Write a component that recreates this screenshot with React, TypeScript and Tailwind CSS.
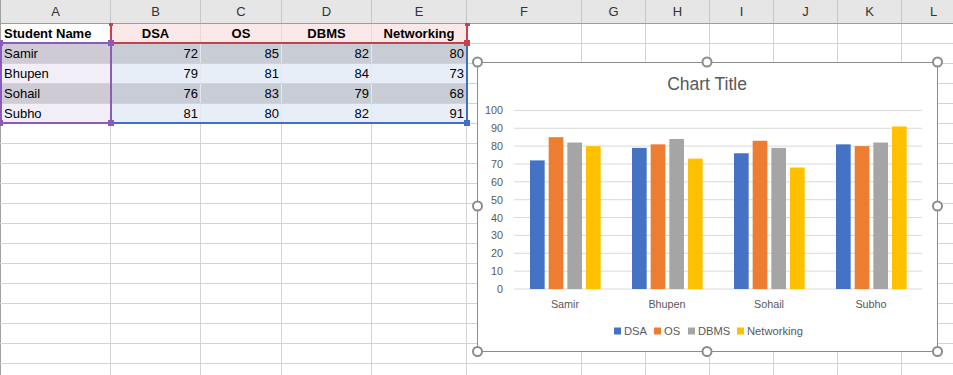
import React from "react";

const COLS = [
  { l: "A", w: 111 },
  { l: "B", w: 90 },
  { l: "C", w: 81 },
  { l: "D", w: 90 },
  { l: "E", w: 95 },
  { l: "F", w: 115 },
  { l: "G", w: 64 },
  { l: "H", w: 64 },
  { l: "I", w: 64 },
  { l: "J", w: 64 },
  { l: "K", w: 64 },
  { l: "L", w: 64 },
];

const DATA: [string, number, number, number, number][] = [
  ["Samir", 72, 85, 82, 80],
  ["Bhupen", 79, 81, 84, 73],
  ["Sohail", 76, 83, 79, 68],
  ["Subho", 81, 80, 82, 91],
];

const SERIES = [
  { name: "DSA", color: "#4472c4" },
  { name: "OS", color: "#ed7d31" },
  { name: "DBMS", color: "#a5a5a5" },
  { name: "Networking", color: "#ffc000" },
];

const FONT = { fontFamily: '"Liberation Sans", Arial, sans-serif' };

function Cell({
  w,
  children,
  className = "",
}: {
  w: number;
  children?: React.ReactNode;
  className?: string;
}) {
  return (
    <div
      className={`h-full shrink-0 border-r border-[#d4d4d4] overflow-hidden whitespace-nowrap ${className}`}
      style={{ width: w }}
    >
      {children}
    </div>
  );
}

function Chart() {
  const y0 = 226;
  const unit = 1.786;
  const ticks = [0, 10, 20, 30, 40, 50, 60, 70, 80, 90, 100];
  const handles = [
    [0.5, 0],
    [230, 0],
    [460.5, 0],
    [0.5, 144],
    [460.5, 144],
    [0.5, 289.5],
    [230, 289.5],
    [460.5, 289.5],
  ];
  return (
    <div className="absolute left-[477px] top-[62px] w-[461px] h-[290px] border border-[#8c8c8c] bg-white">
      <svg width={459} height={288} style={FONT}>
        <text x={229} y={27} textAnchor="middle" fontSize={17.5} fill="#595959">
          Chart Title
        </text>
        {ticks.map((t) => (
          <g key={t}>
            <line
              x1={36}
              x2={444}
              y1={y0 - t * unit}
              y2={y0 - t * unit}
              stroke="#d9d9d9"
              strokeWidth={1}
            />
            <text
              x={25}
              y={y0 - t * unit + 4}
              textAnchor="end"
              fontSize={10.8}
              fill="#595959"
            >
              {t}
            </text>
          </g>
        ))}
        {DATA.map((row, i) => {
          const cs = 36 + i * 102;
          return (
            <g key={row[0]}>
              {SERIES.map((s, j) => {
                const v = row[j + 1] as number;
                return (
                  <rect
                    key={s.name}
                    x={cs + 16 + j * 18.67}
                    y={y0 - v * unit}
                    width={14.67}
                    height={v * unit}
                    fill={s.color}
                  />
                );
              })}
              <text
                x={cs + 51}
                y={245}
                textAnchor="middle"
                fontSize={10.8}
                fill="#595959"
              >
                {row[0]}
              </text>
            </g>
          );
        })}
        {[
          { sx: 136, tx: 146 },
          { sx: 176, tx: 186 },
          { sx: 210, tx: 220 },
          { sx: 259, tx: 269 },
        ].map((p, i) => (
          <g key={i}>
            <rect x={p.sx} y={264.5} width={7} height={7} fill={SERIES[i].color} />
            <text x={p.tx} y={272} fontSize={11.2} fill="#595959">
              {SERIES[i].name}
            </text>
          </g>
        ))}
      </svg>
      {/* selection handles drawn over the frame */}
      <svg
        className="absolute -left-[9px] -top-[9px] overflow-visible pointer-events-none"
        width={479}
        height={308}
      >
        {handles.map(([x, y], i) => (
          <circle
            key={i}
            cx={x + 8}
            cy={y + 8}
            r={4.5}
            fill="#ffffff"
            stroke="#8c8c8c"
            strokeWidth={2}
          />
        ))}
      </svg>
    </div>
  );
}

function RangeHighlights() {
  const red = "#c4424c";
  const blue = "#3f6fc6";
  const purple = "#8a5cb8";
  return (
    <svg
      className="absolute left-0 top-0 pointer-events-none"
      width={480}
      height={130}
    >
      {/* series names B1:E1 */}
      <rect x={110} y={23} width={2} height={21} fill={red} />
      <rect x={466} y={23} width={2} height={21} fill={red} />
      <rect x={110} y={42} width={358} height={2} fill={red} />
      {/* values B2:E5 */}
      <rect x={466} y={43} width={2} height={81} fill={blue} />
      <rect x={110} y={122} width={358} height={2} fill={blue} />
      {/* categories A2:A5 */}
      <rect x={0} y={42} width={112} height={2} fill={purple} />
      <rect x={0} y={42} width={2} height={82} fill={purple} />
      <rect x={110} y={42} width={2} height={82} fill={purple} />
      <rect x={0} y={122} width={112} height={2} fill={purple} />
      {/* handles */}
      <rect x={109} y={23} width={4} height={3} fill={red} />
      <rect x={465} y={23} width={5} height={3} fill={red} />
      <rect x={464} y={40} width={6} height={6} fill={red} />
      <rect x={108} y={40} width={6} height={6} fill={purple} />
      <rect x={108} y={120} width={6} height={6} fill={purple} />
      <rect x={0} y={40} width={3} height={6} fill={purple} />
      <rect x={0} y={120} width={3} height={6} fill={purple} />
      <rect x={464} y={120} width={6} height={6} fill={blue} />
    </svg>
  );
}

export default function App() {
  const emptyRows = 13;
  return (
    <div
      className="relative w-[953px] h-[375px] overflow-hidden bg-white text-[13px] text-black"
      style={FONT}
    >
      {/* column header */}
      <div className="flex h-[24px] bg-[#e6e6e6] border-b border-[#9e9e9e]">
        {COLS.map((c, i) => (
          <div
            key={c.l}
            className={`h-full shrink-0 border-r border-[#c6c6c6] flex items-center justify-center text-[#333333] ${
              i === 0 ? "border-l border-l-[#a0a0a0]" : ""
            }`}
            style={{ width: c.w }}
          >
            {c.l}
          </div>
        ))}
      </div>

      {/* row 1 */}
      <div className="flex h-[20px] border-b border-[#d4d4d4] leading-[19px] font-bold">
        <Cell w={111} className="border-l border-l-[#a0a0a0] pl-[3px]">
          Student Name
        </Cell>
        {["DSA", "OS", "DBMS", "Networking"].map((h, i) => (
          <Cell
            key={h}
            w={COLS[i + 1].w}
            className="bg-[#fbe9e9] text-center border-r-[#eed6d6]"
          >
            {h}
          </Cell>
        ))}
        {COLS.slice(5).map((c) => (
          <Cell key={c.l} w={c.w} />
        ))}
      </div>

      {/* data rows */}
      {DATA.map((row, ri) => {
        const dark = ri % 2 === 0;
        return (
          <div
            key={row[0]}
            className="flex h-[20px] border-b border-[#d4d4d4] leading-[19px]"
          >
            <Cell
              w={111}
              className={`border-l border-l-[#a0a0a0] pl-[3px] ${
                dark ? "bg-[#cfcbd5]" : "bg-[#f1eef8]"
              }`}
            >
              {row[0]}
            </Cell>
            {row.slice(1).map((v, i) => (
              <Cell
                key={i}
                w={COLS[i + 1].w}
                className={`text-right pr-[2px] border-r-[#e4e8ee] ${
                  dark ? "bg-[#c8cdd5]" : "bg-[#e8eef8]"
                }`}
              >
                {v}
              </Cell>
            ))}
            {COLS.slice(5).map((c) => (
              <Cell key={c.l} w={c.w} />
            ))}
          </div>
        );
      })}

      {/* empty rows */}
      {Array.from({ length: emptyRows }).map((_, r) => (
        <div key={r} className="flex h-[20px] border-b border-[#d4d4d4]">
          {COLS.map((c, i) => (
            <Cell
              key={c.l}
              w={c.w}
              className={i === 0 ? "border-l border-l-[#a0a0a0]" : ""}
            />
          ))}
        </div>
      ))}

      <RangeHighlights />
      <Chart />
    </div>
  );
}
